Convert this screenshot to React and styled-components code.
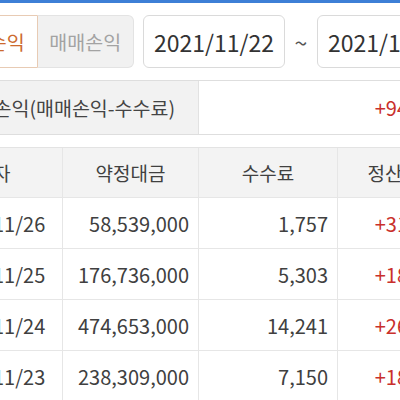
import React from 'react';
import styled, { createGlobalStyle } from 'styled-components';

const Global = createGlobalStyle`
  html, body { margin: 0; padding: 0; background: #fff; overflow: hidden; }
  body { font-family: "Noto Sans CJK KR", "Noto Sans", sans-serif; color: #444; }
  * { box-sizing: border-box; }
`;

const Viewport = styled.div`
  width: 400px;
  height: 400px;
  overflow: hidden;
  background: #fff;
`;

const TopBar = styled.div`
  height: 3px;
  background: #3d7fd6;
`;

const Content = styled.div`
  margin-left: -60px;
  width: 528px;
`;

const FilterRow = styled.div`
  display: flex;
  align-items: stretch;
  height: 53px;
  margin-top: 12px;
`;

const Tabs = styled.div`
  display: flex;
  width: 194px;
`;

const Tab = styled.div`
  flex: 1;
  display: flex;
  align-items: center;
  justify-content: center;
  font-size: 19.5px;
  background: ${p => (p.$active ? '#fff' : '#f1f1f1')};
  color: ${p => (p.$active ? '#cc6a2e' : '#a3a3a3')};
  border: 1px solid ${p => (p.$active ? '#e8cbb4' : '#e3e3e3')};
  border-left: ${p => (p.$active ? '1px solid #e8cbb4' : 'none')};
  border-radius: ${p => (p.$active ? '6px 0 0 6px' : '0 6px 6px 0')};
`;

const DateBox = styled.div`
  width: 142px;
  margin-left: ${p => p.$gap || 0}px;
  display: flex;
  align-items: center;
  justify-content: center;
  border: 1px solid #dadada;
  border-radius: 6px;
  font-size: 23px;
  color: #333;
  white-space: nowrap;
`;

const Tilde = styled.div`
  width: 32px;
  display: flex;
  align-items: center;
  justify-content: center;
  font-size: 23px;
  color: #555;
`;

const Summary = styled.div`
  display: flex;
  height: 55px;
  margin-top: 12px;
  border-top: 1px solid #dedede;
  border-bottom: 1px solid #dedede;
`;

const SummaryLabel = styled.div`
  width: 259px;
  background: #f2f2f2;
  border-right: 1px solid #e2e2e2;
  display: flex;
  align-items: center;
  justify-content: flex-end;
  padding-right: 23px;
  font-size: 19.5px;
  color: #444;
  white-space: nowrap;
`;

const SummaryValue = styled.div`
  flex: 1;
  display: flex;
  align-items: center;
  justify-content: flex-end;
  padding-right: 10px;
  font-size: 20px;
  color: #c9302c;
`;

const Table = styled.div`
  margin-top: 12px;
  display: grid;
  grid-template-columns: 123px 136px 139px 130px;
  border-top: 1px solid #e3e3e3;
`;

const Cell = styled.div`
  height: ${p => (p.$head ? 50 : 51)}px;
  display: flex;
  align-items: center;
  justify-content: ${p => (p.$align === 'right' ? 'flex-end' : 'center')};
  padding: 0 ${p => (p.$align === 'right' ? 9 : p.$date ? 16 : 0)}px 0 0;
  background: ${p => (p.$head ? '#f3f3f3' : '#fff')};
  border-bottom: 1px solid #e6e6e6;
  border-right: 1px solid #e6e6e6;
  font-size: ${p => (p.$head ? 19 : 20)}px;
  color: ${p => (p.$red ? '#c9302c' : '#404040')};
  white-space: nowrap;
`;

const rows = [
  ['2021/11/26', '58,539,000', '1,757', '+312,243'],
  ['2021/11/25', '176,736,000', '5,303', '+184,697'],
  ['2021/11/24', '474,653,000', '14,241', '+265,759'],
  ['2021/11/23', '238,309,000', '7,150', '+182,850'],
];

export default function App() {
  return (
    <Viewport>
      <Global />
      <TopBar />
      <Content>
        <FilterRow>
          <Tabs>
            <Tab $active>실현손익</Tab>
            <Tab>매매손익</Tab>
          </Tabs>
          <DateBox $gap={9}>2021/11/22</DateBox>
          <Tilde>~</Tilde>
          <DateBox>2021/11/26</DateBox>
        </FilterRow>
        <Summary>
          <SummaryLabel>실현손익(매매손익-수수료)</SummaryLabel>
          <SummaryValue>+945,549</SummaryValue>
        </Summary>
        <Table>
          <Cell $head $date>일자</Cell>
          <Cell $head>약정대금</Cell>
          <Cell $head>수수료</Cell>
          <Cell $head>정산금액</Cell>
          {rows.map(r => (
            <React.Fragment key={r[0]}>
              <Cell $date>{r[0]}</Cell>
              <Cell $align="right">{r[1]}</Cell>
              <Cell $align="right">{r[2]}</Cell>
              <Cell $align="right" $red>{r[3]}</Cell>
            </React.Fragment>
          ))}
        </Table>
      </Content>
    </Viewport>
  );
}
